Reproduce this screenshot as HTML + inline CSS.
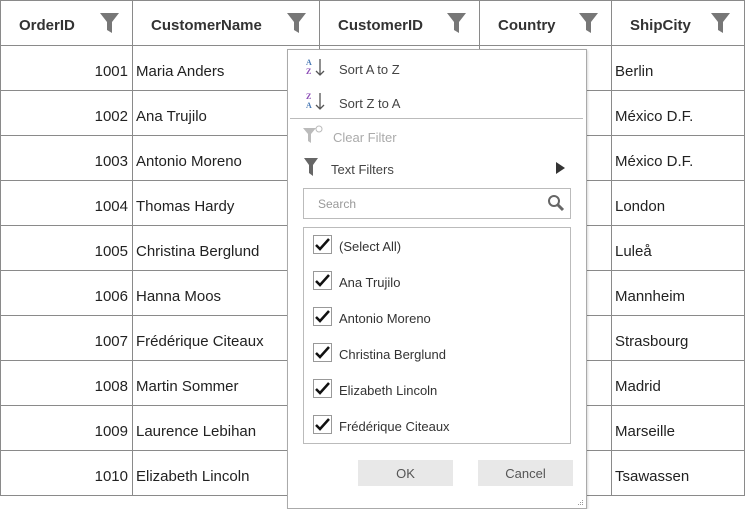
<!DOCTYPE html>
<html><head><meta charset="utf-8"><style>
body{margin:0;width:745px;height:509px;background:#fff;position:relative;overflow:hidden;font-family:"Segoe UI","Liberation Sans",sans-serif;color:#222}
.a{position:absolute}
.h{font-size:15px;font-weight:bold;color:#333;top:17px}
.c{font-size:15px;color:#222;margin-top:2px}
.vl{position:absolute;top:0;width:1px;height:496px;background:#8a8a8a}
.hl{position:absolute;left:0;width:745px;height:1px;background:#8a8a8a}
.m{font-size:13px;color:#444;margin-top:2px}
.cb{position:absolute;left:313px;width:17px;height:17px;border:1px solid #999;background:#fff}
.cb svg{position:absolute;left:1px;top:2px}
.lt{position:absolute;left:339px;font-size:13px;color:#333;margin-top:2px}
.btn{position:absolute;top:460px;width:95px;height:26px;background:#e8e8e8;font-size:13px;color:#555;text-align:center;line-height:28px}
</style></head><body>
<div class="hl" style="top:0"></div>
<div class="hl" style="top:45px"></div>
<div class="hl" style="top:90px"></div>
<div class="hl" style="top:135px"></div>
<div class="hl" style="top:180px"></div>
<div class="hl" style="top:225px"></div>
<div class="hl" style="top:270px"></div>
<div class="hl" style="top:315px"></div>
<div class="hl" style="top:360px"></div>
<div class="hl" style="top:405px"></div>
<div class="hl" style="top:450px"></div>
<div class="hl" style="top:495px"></div>
<div class="vl" style="left:0"></div>
<div class="vl" style="left:132px"></div>
<div class="vl" style="left:319px"></div>
<div class="vl" style="left:479px"></div>
<div class="vl" style="left:611px"></div>
<div class="vl" style="left:744px"></div>

<div class="a h" style="left:19px">OrderID</div>
<div class="a h" style="left:151px">CustomerName</div>
<div class="a h" style="left:338px">CustomerID</div>
<div class="a h" style="left:498px">Country</div>
<div class="a h" style="left:630px">ShipCity</div>
<svg class="a" style="left:100px;top:13px" width="19" height="20"><path d="M0 0H19L12 9V20L7 17V9Z" fill="#777"/></svg>
<svg class="a" style="left:287px;top:13px" width="19" height="20"><path d="M0 0H19L12 9V20L7 17V9Z" fill="#777"/></svg>
<svg class="a" style="left:447px;top:13px" width="19" height="20"><path d="M0 0H19L12 9V20L7 17V9Z" fill="#777"/></svg>
<svg class="a" style="left:579px;top:13px" width="19" height="20"><path d="M0 0H19L12 9V20L7 17V9Z" fill="#777"/></svg>
<svg class="a" style="left:711px;top:13px" width="19" height="20"><path d="M0 0H19L12 9V20L7 17V9Z" fill="#777"/></svg>

<div class="a c" style="left:0;width:128px;text-align:right;top:61px">1001</div><div class="a c" style="left:136px;top:61px">Maria Anders</div><div class="a c" style="left:615px;top:61px">Berlin</div>
<div class="a c" style="left:0;width:128px;text-align:right;top:106px">1002</div><div class="a c" style="left:136px;top:106px">Ana Trujilo</div><div class="a c" style="left:615px;top:106px">México D.F.</div>
<div class="a c" style="left:0;width:128px;text-align:right;top:151px">1003</div><div class="a c" style="left:136px;top:151px">Antonio Moreno</div><div class="a c" style="left:615px;top:151px">México D.F.</div>
<div class="a c" style="left:0;width:128px;text-align:right;top:196px">1004</div><div class="a c" style="left:136px;top:196px">Thomas Hardy</div><div class="a c" style="left:615px;top:196px">London</div>
<div class="a c" style="left:0;width:128px;text-align:right;top:241px">1005</div><div class="a c" style="left:136px;top:241px">Christina Berglund</div><div class="a c" style="left:615px;top:241px">Luleå</div>
<div class="a c" style="left:0;width:128px;text-align:right;top:286px">1006</div><div class="a c" style="left:136px;top:286px">Hanna Moos</div><div class="a c" style="left:615px;top:286px">Mannheim</div>
<div class="a c" style="left:0;width:128px;text-align:right;top:331px">1007</div><div class="a c" style="left:136px;top:331px">Frédérique Citeaux</div><div class="a c" style="left:615px;top:331px">Strasbourg</div>
<div class="a c" style="left:0;width:128px;text-align:right;top:376px">1008</div><div class="a c" style="left:136px;top:376px">Martin Sommer</div><div class="a c" style="left:615px;top:376px">Madrid</div>
<div class="a c" style="left:0;width:128px;text-align:right;top:421px">1009</div><div class="a c" style="left:136px;top:421px">Laurence Lebihan</div><div class="a c" style="left:615px;top:421px">Marseille</div>
<div class="a c" style="left:0;width:128px;text-align:right;top:466px">1010</div><div class="a c" style="left:136px;top:466px">Elizabeth Lincoln</div><div class="a c" style="left:615px;top:466px">Tsawassen</div>

<div class="a" style="left:287px;top:49px;width:298px;height:458px;background:#fff;border:1px solid #aaa;box-shadow:1px 1px 2px rgba(0,0,0,.15)"></div>
<div class="a" style="left:306px;top:58px;font:bold 8px 'Liberation Serif',serif;line-height:9px"><span style="color:#4a7ab5">A</span><br><span style="color:#8a4ab5">Z</span></div>
<svg class="a" style="left:315px;top:59px" width="10" height="18"><path d="M5 0V16M1 12L5 16L9 12" stroke="#555" stroke-width="1.3" fill="none"/></svg>
<div class="a m" style="left:339px;top:60px">Sort A to Z</div>
<div class="a" style="left:306px;top:92px;font:bold 8px 'Liberation Serif',serif;line-height:9px"><span style="color:#8a4ab5">Z</span><br><span style="color:#4a7ab5">A</span></div>
<svg class="a" style="left:315px;top:93px" width="10" height="18"><path d="M5 0V16M1 12L5 16L9 12" stroke="#555" stroke-width="1.3" fill="none"/></svg>
<div class="a m" style="left:339px;top:94px">Sort Z to A</div>
<div class="a" style="left:290px;top:118px;width:293px;height:1px;background:#bbb"></div>
<svg class="a" style="left:303px;top:125px" width="20" height="20"><path d="M0 3H13L8 9V18L5 16V9Z" fill="#bbb"/><circle cx="16" cy="4" r="3" fill="none" stroke="#bbb"/></svg>
<div class="a m" style="left:333px;top:128px;color:#aaa">Clear Filter</div>
<svg class="a" style="left:304px;top:158px" width="14" height="18"><path d="M0 0H14L9 7V18L5 15V7Z" fill="#666"/></svg>
<div class="a m" style="left:331px;top:160px">Text Filters</div>
<svg class="a" style="left:556px;top:162px" width="10" height="12"><path d="M0 0L9 6L0 12Z" fill="#333"/></svg>
<div class="a" style="left:303px;top:188px;width:266px;height:29px;border:1px solid #bbb"></div>
<div class="a" style="left:318px;top:197px;font-size:12px;color:#999">Search</div>
<svg class="a" style="left:547px;top:194px" width="18" height="18"><circle cx="7" cy="7" r="5" fill="none" stroke="#666" stroke-width="2"/><path d="M11 11L16 16" stroke="#666" stroke-width="3"/></svg>
<div class="a" style="left:303px;top:227px;width:266px;height:215px;border:1px solid #bbb"></div>
<div class="cb" style="top:235px"><svg width="15" height="13"><path d="M1 7L5 11L14 1" stroke="#111" stroke-width="2.5" fill="none"/></svg></div><div class="lt" style="top:237px">(Select All)</div>
<div class="cb" style="top:271px"><svg width="15" height="13"><path d="M1 7L5 11L14 1" stroke="#111" stroke-width="2.5" fill="none"/></svg></div><div class="lt" style="top:273px">Ana Trujilo</div>
<div class="cb" style="top:307px"><svg width="15" height="13"><path d="M1 7L5 11L14 1" stroke="#111" stroke-width="2.5" fill="none"/></svg></div><div class="lt" style="top:309px">Antonio Moreno</div>
<div class="cb" style="top:343px"><svg width="15" height="13"><path d="M1 7L5 11L14 1" stroke="#111" stroke-width="2.5" fill="none"/></svg></div><div class="lt" style="top:345px">Christina Berglund</div>
<div class="cb" style="top:379px"><svg width="15" height="13"><path d="M1 7L5 11L14 1" stroke="#111" stroke-width="2.5" fill="none"/></svg></div><div class="lt" style="top:381px">Elizabeth Lincoln</div>
<div class="cb" style="top:415px"><svg width="15" height="13"><path d="M1 7L5 11L14 1" stroke="#111" stroke-width="2.5" fill="none"/></svg></div><div class="lt" style="top:417px">Frédérique Citeaux</div>
<div class="btn" style="left:358px">OK</div>
<div class="btn" style="left:478px">Cancel</div>
<svg class="a" style="left:578px;top:500px" width="6" height="6"><rect x="4" y="0" width="1" height="1" fill="#999"/><rect x="2" y="2" width="1" height="1" fill="#999"/><rect x="4" y="2" width="1" height="1" fill="#999"/><rect x="0" y="4" width="1" height="1" fill="#999"/><rect x="2" y="4" width="1" height="1" fill="#999"/><rect x="4" y="4" width="1" height="1" fill="#999"/></svg>
</body></html>
